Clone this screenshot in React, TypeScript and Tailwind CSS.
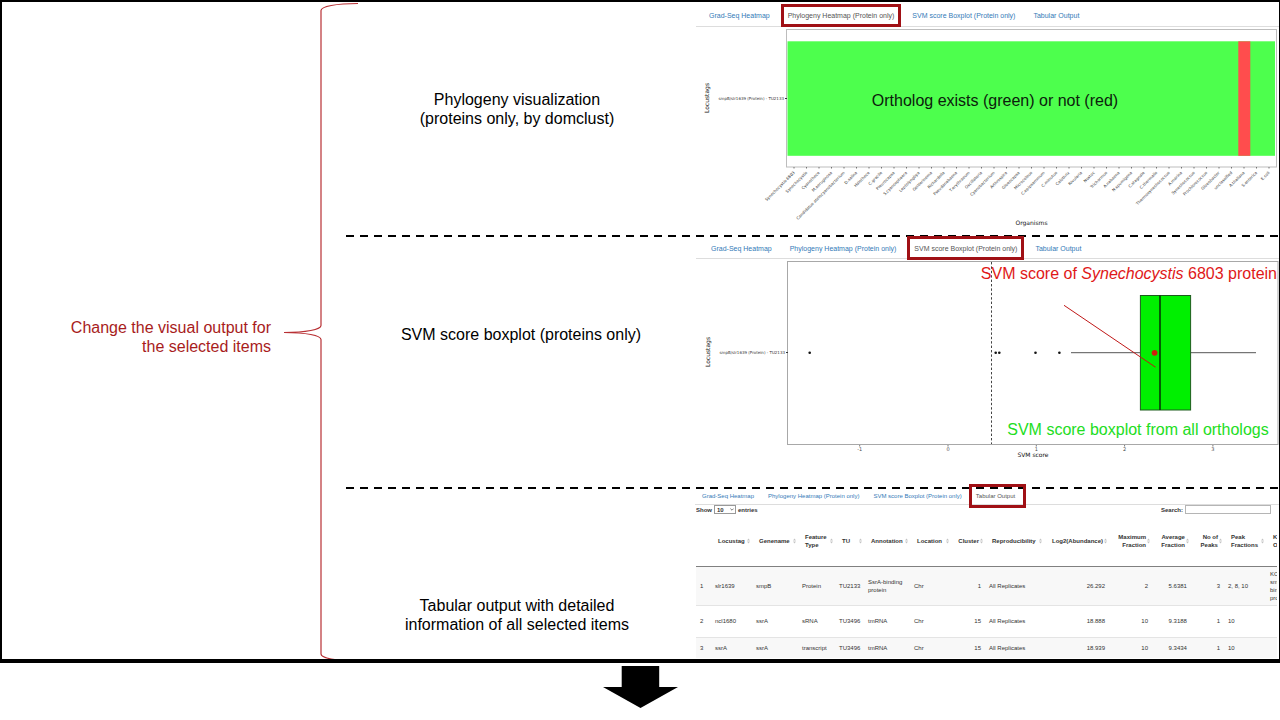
import React from "react";

const TABS = [
  "Grad-Seq Heatmap",
  "Phylogeny Heatmap (Protein only)",
  "SVM score Boxplot (Protein only)",
  "Tabular Output",
];

const ORGANISMS = [
  "Synechocystis 6803", "Synechocystis", "Cyanothece", "M.aeruginosa",
  "Candidatus atelocyanobacterium", "D.salina", "Halothece", "C.gracile",
  "Pleurocapsa", "S.cyanosphaera", "Leptolyngbya", "Geitlerinema",
  "Richardella", "Pseudanabaena", "T.erythraeum", "Oscillatoria",
  "Cyanobacterium", "Arthrospira", "Gloeocapsa", "Microcoleus",
  "C.epipsammum", "C.minutus", "Calothrix", "Rivularia", "Nostoc",
  "Trichormus", "A.nabaena", "N.spumigena", "C.stagnale", "C.thermalis",
  "Thermosynechococcus", "A.marina", "Synechococcus", "Prochlorococcus",
  "Gloeobacter", "unclassified", "A.thaliana", "S.enterica", "E.coli",
];

type TabBarProps = { active: number; bar: string; tab: string };

function TabBar({ active, bar, tab }: TabBarProps) {
  return (
    <div role="tablist" className={`flex border-b border-[#dddddd] ${bar}`}>
      {TABS.map((name, i) => (
        <button
          key={name}
          type="button"
          role="tab"
          aria-selected={i === active}
          className={`relative shrink-0 border-[3px] pl-1 leading-none whitespace-nowrap ${tab} ${
            i === active ? "border-[#a01015] text-[#555555]" : "border-transparent text-[#337ab7]"
          } ${i === TABS.length - 1 ? "pr-2" : "pr-1"}`}
        >
          {name}
        </button>
      ))}
    </div>
  );
}

function Divider() {
  return (
    <div className="h-0.5 bg-[repeating-linear-gradient(90deg,#000_0_8px,transparent_8px_14px)]" />
  );
}

type SectionProps = { label: React.ReactNode; labelClass: string; children: React.ReactNode };

function Section({ label, labelClass, children }: SectionProps) {
  return (
    <section className="flex">
      <h2 className={`w-[350px] shrink-0 text-center text-base leading-[19px] ${labelClass}`}>
        {label}
      </h2>
      <div className="min-w-0 flex-1">{children}</div>
    </section>
  );
}

function LocusAxis({ x, y }: { x: number; y: number }) {
  return (
    <g>
      <text x={x - 77} y={y} fontSize="6" fill="#111" textAnchor="middle" transform={`rotate(-90 ${x - 77} ${y})`}>
        Locustags
      </text>
      <text x={x - 2} y={y + 2} fontSize="4" fill="#333" textAnchor="end">
        smpB/slr1639 (Protein) - TU2133
      </text>
      <path d={`M${x - 1} ${y + 0.5}h2`} stroke="#333" strokeWidth="1" />
    </g>
  );
}

function PhylogenyHeatmap() {
  return (
    <svg viewBox="696 27 583 208" className="block h-auto w-full font-['DejaVu_Sans',sans-serif]" role="img" aria-label="Phylogeny heatmap">
      <rect x="786.5" y="29.5" width="490" height="137.5" fill="#fff" stroke="#bdbdbd" />
      <rect x="787.5" y="41.3" width="487.5" height="114.5" fill="#4dff4d" />
      <rect x="1238.3" y="41.3" width="12" height="114.5" fill="#ff4d4d" />
      <LocusAxis x={786} y={98} />
      {ORGANISMS.map((name, i) => {
        const x = 794 + i * 12.5;
        return (
          <g key={i}>
            <path d={`M${x} 167v1.5`} stroke="#555" strokeWidth="0.8" />
            <text x={x + 1} y="173" fontSize="4" fill="#333" textAnchor="end" transform={`rotate(-45 ${x + 1} 173)`}>
              {name}
            </text>
          </g>
        );
      })}
      <text x="1031.5" y="225" fontSize="6" fill="#111" textAnchor="middle">Organisms</text>
      <text x="995" y="106" fontSize="16" fill="#0c210c" textAnchor="middle" className="font-['Liberation_Sans',sans-serif]">
        Ortholog exists (green) or not (red)
      </text>
    </svg>
  );
}

function ScoreBoxplot() {
  return (
    <svg viewBox="696 259 583 228" className="block h-auto w-full font-['DejaVu_Sans',sans-serif]" role="img" aria-label="SVM score boxplot">
      <rect x="787.5" y="261.5" width="490.5" height="183" fill="#fff" stroke="#a8a8a8" />
      <path d="M991.5 262v182" stroke="#444" strokeDasharray="2.4 2" />
      <LocusAxis x={787} y={352} />
      {[809.7, 995.7, 999.3, 1035.5, 1059.4].map((x) => (
        <circle key={x} cx={x} cy="352.7" r="1.3" fill="#111" />
      ))}
      <path d="M1071 352.7H1140M1191 352.7H1256" stroke="#555" />
      <rect x="1140.4" y="295.5" width="50.2" height="114.5" fill="#00f000" stroke="#1d5c1d" />
      <path d="M1160 295.5V410" stroke="#063906" strokeWidth="1.6" />
      <circle cx="1154.6" cy="352.8" r="2.9" fill="#d3200c" />
      <path d="M1064 305.3L1155.5 367.2" stroke="#c01818" />
      {[-1, 0, 1, 2, 3].map((n) => {
        const x = 948 + n * 88.3;
        return (
          <g key={n}>
            <path d={`M${x} 445v1.5`} stroke="#555" strokeWidth="0.8" />
            <text x={x} y="451" fontSize="5" fill="#4d4d4d" textAnchor="middle">{n}</text>
          </g>
        );
      })}
      <text x="1033" y="457" fontSize="6" fill="#111" textAnchor="middle">SVM score</text>
      <g fontSize="16" className="font-['Liberation_Sans',sans-serif]">
        <text x="1277" y="279" fill="#e01818" textAnchor="end">
          SVM score of <tspan fontStyle="italic">Synechocystis</tspan> 6803 protein
        </text>
        <text x="1138" y="435" fill="#22dd22" textAnchor="middle">SVM score boxplot from all orthologs</text>
      </g>
    </svg>
  );
}

type Column = { lines: string[]; width: number; right?: boolean; plain?: boolean };

const COLUMNS: Column[] = [
  { lines: [], width: 15, plain: true },
  { lines: ["Locustag"], width: 41 },
  { lines: ["Genename"], width: 46 },
  { lines: ["Feature", "Type"], width: 37 },
  { lines: ["TU"], width: 29 },
  { lines: ["Annotation"], width: 46 },
  { lines: ["Location"], width: 41 },
  { lines: ["Cluster"], width: 34, right: true },
  { lines: ["Reproducibility"], width: 59 },
  { lines: ["Log2(Abundance)"], width: 65, right: true },
  { lines: ["Maximum", "Fraction"], width: 43, right: true },
  { lines: ["Average", "Fraction"], width: 39, right: true },
  { lines: ["No of", "Peaks"], width: 33, right: true },
  { lines: ["Peak", "Fractions"], width: 42 },
  { lines: ["K", "O"], width: 13, plain: true },
];

const ROWS: { height: string; cells: string[] }[] = [
  {
    height: "h-[39px] bg-[#f8f8f8]",
    cells: ["1", "slr1639", "smpB", "Protein", "TU2133", "SsrA-binding\nprotein", "Chr", "1", "All Replicates", "26.292", "2", "5.6381", "3", "2, 8, 10", "KO\nsm\nbin\npro"],
  },
  {
    height: "h-8",
    cells: ["2", "ncl1680", "ssrA", "sRNA", "TU3496", "tmRNA", "Chr", "15", "All Replicates", "18.888", "10", "9.3188", "1", "10", ""],
  },
  {
    height: "h-[21px] bg-[#f8f8f8]",
    cells: ["3", "ssrA", "ssrA", "transcript", "TU3496", "tmRNA", "Chr", "15", "All Replicates", "18.939", "10", "9.3434", "1", "10", ""],
  },
];

function SortIcon() {
  return (
    <svg viewBox="0 0 3 6" className="h-1.5 w-[3px] shrink-0" aria-hidden="true">
      <path d="M0 2.6L1.5 0.4L3 2.6zM0 3.4L1.5 5.6L3 3.4z" fill="#c4c4c4" />
    </svg>
  );
}

function TabularOutput() {
  return (
    <div className="mr-0.5 overflow-hidden text-[6px] leading-[8px] text-[#333333]">
      <div className="flex h-[9px] items-center justify-between pr-1.5 font-bold">
        <label className="flex items-center gap-0.5">
          Show
          <span className="relative flex">
            <select defaultValue="10" className="h-[9px] w-[22px] appearance-none border border-[#999999] bg-white pl-0.5 leading-none">
              <option>10</option>
              <option>25</option>
            </select>
            <svg viewBox="0 0 4 3" className="pointer-events-none absolute top-[3px] right-0.5 h-[3px] w-1" aria-hidden="true">
              <path d="M0.4 0.6L2 2.2L3.6 0.6" fill="none" stroke="#444" strokeWidth="0.7" />
            </svg>
          </span>
          entries
        </label>
        <label className="flex items-center gap-0.5">
          Search:
          <input type="search" className="h-[9px] w-[86px] appearance-none border border-[#b5b5b5] bg-white" />
        </label>
      </div>
      <table className="w-[calc(100%+2px)] table-fixed border-collapse">
        <colgroup>
          {COLUMNS.map((c, i) => (
            <col key={i} style={{ width: `${(c.width / 583) * 100}%` }} />
          ))}
        </colgroup>
        <thead>
          <tr className="h-[52px] border-b border-[#808080]">
            {COLUMNS.map((c, i) => (
              <th key={i} scope="col" className={`overflow-hidden p-0 pt-0.5 pl-[7px] align-middle whitespace-nowrap ${c.right ? "text-right" : "text-left"}`}>
                <div className={`flex items-center gap-px pr-0.5 ${c.right ? "justify-end" : "justify-between"}`}>
                  <span>
                    {c.lines.map((line) => (
                      <span key={line} className="block">{line}</span>
                    ))}
                  </span>
                  {!c.plain && <SortIcon />}
                </div>
              </th>
            ))}
          </tr>
        </thead>
        <tbody>
          {ROWS.map((row) => (
            <tr key={row.cells[0]} className={`border-b border-[#e4e4e4] last:border-b-0 ${row.height}`}>
              {row.cells.map((cell, i) => (
                <td key={i} className={`overflow-hidden p-0 pl-1 align-middle whitespace-pre ${COLUMNS[i].right ? "pr-1 text-right" : "text-left"}`}>
                  {cell}
                </td>
              ))}
            </tr>
          ))}
        </tbody>
      </table>
    </div>
  );
}

export default function App() {
  return (
    <main className="bg-white font-['Liberation_Sans',Arial,sans-serif] text-black">
      <div className="flex overflow-hidden border-t-2 border-r border-b-4 border-l-2 border-black">
        <h1 className="w-[270px] shrink-0 self-center pt-3 pr-px text-right text-base leading-[19px] text-[#a81c1c]">
          Change the visual output for
          <br />
          the selected items
        </h1>
        <svg viewBox="284 2 74 657" className="-mr-3 ml-3 w-[74px] shrink-0" aria-hidden="true">
          <path
            d="M358 3.5C336 3.5 321 6.5 321 10.5V325.5C321 329.5 306 332.5 284 332.5C306 332.5 321 335.5 321 339.5V654C321 658 336 661 358 661"
            fill="none"
            stroke="#b83034"
            strokeWidth="1.2"
          />
        </svg>
        <div className="min-w-0 flex-1">
          <Section
            labelClass="pt-[88px] pr-2"
            label={<>Phylogeny visualization<br />(proteins only, by domclust)</>}
          >
            <TabBar active={1} bar="h-[25px] gap-1 pt-0.5 pl-1.5" tab="h-[23px] text-[7px]" />
            <PhylogenyHeatmap />
          </Section>
          <Divider />
          <Section labelClass="pt-[88px]" label="SVM score boxplot (proteins only)">
            <TabBar active={2} bar="h-[22px] gap-1 pl-2" tab="-mt-px h-6 text-[7px]" />
            <ScoreBoxplot />
          </Section>
          <Divider />
          <Section
            labelClass="pt-[107px] pr-2"
            label={<>Tabular output with detailed<br />information of all selected items</>}
          >
            <TabBar active={3} bar="-ml-px h-4" tab="-mt-[5px] h-6 text-[6px]" />
            <TabularOutput />
          </Section>
        </div>
      </div>
      <svg viewBox="0 0 75 42" className="mx-auto mt-[3px] block h-[42px] w-[75px]" aria-hidden="true">
        <path d="M18.7 0H56.2V21H75L37.5 42L0 21H18.7z" fill="#000" />
      </svg>
    </main>
  );
}
